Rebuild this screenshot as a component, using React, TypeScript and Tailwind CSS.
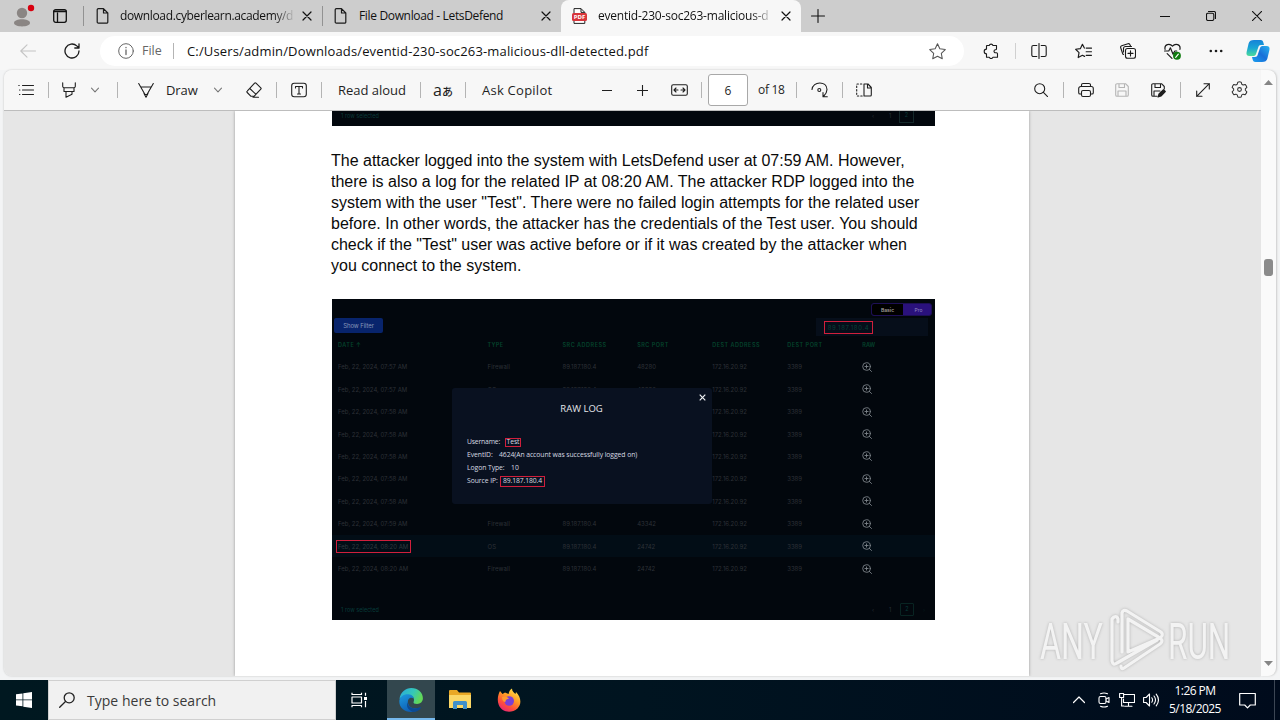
import type { ReactNode } from "react";

const ui = "font-['Open_Sans','Noto_Sans',sans-serif]";

function Icon({ cls, box = "0 0 16 16", sw = 1.1, children }: { cls: string; box?: string; sw?: number; children: ReactNode }) {
  return (
    <svg className={`shrink-0 ${cls}`} viewBox={box} fill="none" stroke="currentColor" strokeWidth={sw} strokeLinecap="round" strokeLinejoin="round">
      {children}
    </svg>
  );
}

const Rule = ({ cls }: { cls: string }) => <div className={`h-4 w-px shrink-0 bg-[#b4b4b4] ${cls}`} />;

const Doc = ({ cls }: { cls: string }) => (
  <Icon cls={`h-4 w-[13px] text-[#1b1b1b] ${cls}`} box="0 0 12 16" sw={1.2}>
    <path d="M2 .7h5l4.300 4.300v9a1.200 1.200 0 0 1-1.200 1.200H2A1.200 1.200 0 0 1 .7 14V2A1.200 1.200 0 0 1 2 .7zM7 .7V5h4.300" />
  </Icon>
);

const Cross = ({ cls }: { cls: string }) => (
  <Icon cls={cls} box="0 0 10 10" sw={1.2}>
    <path d="M1 1l8 8M9 1L1 9" />
  </Icon>
);

const Chevron = ({ cls }: { cls: string }) => (
  <Icon cls={`h-2 w-2 text-[#777] ${cls}`} box="0 0 8 8">
    <path d="M.5 2.200L4 5.800l3.500-3.600" />
  </Icon>
);

function TabStrip() {
  return (
    <div className="flex h-8 items-center bg-[#cdcdcd] text-[12px] text-[#111]">
      <svg className="ml-3 h-6 w-6 shrink-0" viewBox="0 0 24 24">
        <circle cx="10" cy="9" r="5.200" fill="#8a8583" />
        <path d="M2 19c0-5 16-5 16 0 0 4.500-16 4.500-16 0z" fill="#8a8583" />
        <circle cx="19" cy="4" r="3.200" fill="#d8000f" />
      </svg>
      <Icon cls="ml-[17px] h-[14px] w-[14px] text-[#111]" box="0 0 14 14" sw={1.3}>
        <rect x=".7" y=".7" width="12.600" height="12.600" rx="2" />
        <path d="M1 2.300h12" strokeWidth="1.800" />
        <path d="M4.500 4v9" />
      </Icon>
      <div className="ml-4 h-5 w-px shrink-0 bg-[#929292]" />
      <Doc cls="ml-3" />
      <div className="ml-[11px] w-[174px] shrink-0 overflow-hidden whitespace-nowrap bg-gradient-to-r from-[#111] from-88% to-[#c0c0c0] to-100% bg-clip-text tracking-[-0.350px] text-transparent">download.cyberlearn.academy/d</div>
      <Cross cls="ml-[8px] h-[10px] w-[10px]" />
      <div className="ml-[10px] h-5 w-px shrink-0 bg-[#929292]" />
      <Doc cls="ml-[11px]" />
      <div className="ml-[12px] w-[174px] shrink-0 whitespace-nowrap tracking-[-0.340px]">File Download - LetsDefend</div>
      <Cross cls="ml-2 h-[10px] w-[10px]" />
      <div className="ml-[10px] flex h-8 w-[240px] shrink-0 items-center rounded-t-lg bg-[#f7f7f7]">
        <svg className="ml-[11px] h-4 w-[15px] shrink-0" viewBox="0 0 15 16">
          <path d="M2 .6h7l3.800 3.800v11H2z" fill="#fff" stroke="#222" />
          <path d="M9 .6v3.800h3.800" fill="none" stroke="#222" />
          <rect x="0" y="5" width="15" height="8" rx="1.500" fill="#d8353b" />
          <text x="7.500" y="11.200" fontSize="6" fontWeight="700" fontFamily="Open Sans" textAnchor="middle" fill="#fff">PDF</text>
        </svg>
        <div className="ml-[11px] w-[173px] shrink-0 overflow-hidden whitespace-nowrap bg-gradient-to-r from-[#111] from-88% to-[#e0e0e0] to-100% bg-clip-text tracking-[-0.220px] text-transparent">eventid-230-soc263-malicious-d</div>
        <Cross cls="ml-[10px] h-[10px] w-[10px]" />
      </div>
      <Icon cls="ml-[10px] h-[14px] w-[14px]" box="0 0 14 14">
        <path d="M7 .5v13M.5 7h13" />
      </Icon>
      <Icon cls="ml-[335px] h-[10px] w-[10px]" box="0 0 10 10"><path d="M0 5.500h10" /></Icon>
      <Icon cls="ml-9 h-[10px] w-[10px]" box="0 0 10 10">
        <rect x=".5" y="2.200" width="7.300" height="7.300" rx="1.500" />
        <path d="M2.500.5H8A1.500 1.500 0 0 1 9.500 2v5.500" />
      </Icon>
      <Icon cls="ml-9 h-[10px] w-[10px]" box="0 0 10 10"><path d="M0 0l10 10M10 0L0 10" /></Icon>
    </div>
  );
}

function AddressBar() {
  return (
    <div className="flex h-[38px] items-center bg-[#f7f7f7] text-[#1b1b1b]">
      <Icon cls="ml-5 h-4 w-4 text-[#c4c4c4]"><path d="M15.500 8H1M7 1.800L.8 8 7 14.200" /></Icon>
      <Icon cls="ml-7 h-4 w-4" sw={1.3}><path d="M15 8a7 7 0 1 1-2.200-5.100L15 5M15 .8V5h-4.200" /></Icon>
      <div className="ml-5 flex h-[30px] w-[864px] shrink-0 items-center rounded-full bg-white">
        <Icon cls="ml-[18px] h-4 w-4 text-[#666]" sw={1}>
          <circle cx="8" cy="8" r="7.300" />
          <path d="M8 7v4.500M8 4.500v.2" strokeWidth="1.300" />
        </Icon>
        <div className="ml-2 w-[20px] shrink-0 whitespace-nowrap pt-[1px] text-[12.500px] text-[#666]">File</div>
        <Rule cls="ml-[11px]" />
        <div className="ml-[13px] w-[462px] shrink-0 whitespace-nowrap pt-[1px] text-[13px] tracking-[0.150px] text-[#111]">C:/Users/admin/Downloads/eventid-230-soc263-malicious-dll-detected.pdf</div>
        <Icon cls="ml-[280px] h-[17px] w-[17px] text-[#555]" sw={1}>
          <path d="M8 .8l2.200 4.700 5.100.7-3.700 3.500.9 5.100L8 12.400l-4.500 2.400.9-5.100L.7 6.200l5.100-.7z" />
        </Icon>
      </div>
      <Icon cls="ml-[19px] h-4 w-4">
        <path d="M4 2.500h2.200a2 2 0 0 1 3.800 0h3.500v3.300a1 1 0 0 1-1 1 1.500 1.500 0 0 0 0 3h1a1 1 0 0 1 1 1v3.400H10a2 2 0 0 1-3.800 0H3.500v-3.500a2.300 2.300 0 1 1 0-4.600V3z" />
      </Icon>
      <Rule cls="ml-4 bg-[#d0d0d0]" />
      <Icon cls="ml-[15px] h-4 w-4"><path d="M5.800 2.500H2.300A1.500 1.500 0 0 0 .8 4v8a1.500 1.500 0 0 0 1.500 1.500h3.500M8 .5v15M10.200 2.500h3.500A1.500 1.500 0 0 1 15.200 4v8a1.500 1.500 0 0 1-1.500 1.500h-3.500" /></Icon>
      <Icon cls="ml-7 h-[17px] w-[17px]"><path d="M8.800 4.800L7 1.200 5 5.300l-4.400.6 3.200 3.200-.8 4.600 4-2.100 2 1M10.500 4.800h5M10.500 8.200h5M10.500 11.600h5" /></Icon>
      <Icon cls="ml-[28px] h-4 w-4">
        <rect x="5.500" y="5.500" width="10" height="9.800" rx="2" />
        <path d="M8 10.400h5M10.500 7.900v5M3.500 11.500L2.800 11 .7 4.800a1.600 1.600 0 0 1 1-2L8 .8a1.600 1.600 0 0 1 2 1l.6 1.500M3.500 9V5.500a2 2 0 0 1 2-2h6" />
      </Icon>
      <Icon cls="ml-7 h-[17px] w-[17px]">
        <path d="M1 6C0 1 5.500 0 8 3c2.500-3 8-2 7 3M.5 7.500h4l1.500-3 2.500 6 1.700-3H12M3 10l4.500 4.500" />
        <circle cx="12.200" cy="12" r="3.700" fill="#107c10" stroke="none" />
        <path d="M11 13.500l2.500-3" stroke="#fff" />
      </Icon>
      <Icon cls="ml-7 h-[14px] w-[14px]" box="0 0 14 14"><g fill="currentColor" stroke="none"><circle cx="1.800" cy="7" r="1.300" /><circle cx="7" cy="7" r="1.300" /><circle cx="12.200" cy="7" r="1.300" /></g></Icon>
      <svg className="ml-[23px] h-6 w-6 shrink-0" viewBox="0 0 24 24">
        <defs>
          <linearGradient id="cpA" x1="0" y1="0" x2="0" y2="1"><stop stopColor="#1582d8" /><stop offset=".5" stopColor="#18a5d5" /><stop offset="1" stopColor="#4ddc9a" /></linearGradient>
          <linearGradient id="cpB" x1="1" y1="0" x2="0" y2="1"><stop stopColor="#28b4ef" /><stop offset=".5" stopColor="#1a6fd8" /><stop offset="1" stopColor="#1aa0f0" /></linearGradient>
        </defs>
        <path d="M8 1h6.500c2 0 2.500 1.200 3 3l.5 2h-3c-1.500 0-2.200.8-2.700 2.200L10 15c-.5 1.500-1.500 2-3 2H3.500C1 17 0 15.500.6 13l2-8.500C3.200 2 5 1 8 1z" fill="url(#cpA)" />
        <path d="M16 23H9.500c-2 0-2.500-1.200-3-3L6 18h3c1.500 0 2.200-.8 2.700-2.200L14 9c.5-1.500 1.500-2 3-2h3.500c2.500 0 3.500 1.500 2.900 4l-2 8.500c-.6 2.500-2.400 3.500-5.400 3.500z" fill="url(#cpB)" />
      </svg>
    </div>
  );
}

function PdfToolbar() {
  return (
    <div className="flex h-[41px] w-[1257px] shrink-0 items-center border-b border-[#bdbdbd] bg-[#f7f7f7] text-[13px] text-[#1f1f1f]">
      <Icon cls="ml-[14px] h-4 w-4"><path d="M4.500 3.500h11M4.500 8h11M4.500 12.500h11M.8 3.500h.4M1.500 8h.4M1.500 12.500h.4" /></Icon>
      <Rule cls="ml-[14px]" />
      <Icon cls="ml-[13px] h-4 w-[14px]" box="0 0 14 16"><path d="M.7.8v3.700a1.500 1.500 0 0 0 1.500 1.300h9.600a1.500 1.500 0 0 0 1.500-1.300V.8M2 6v3.500h10V6M4 9.500v5.700l6-3V9.500" /></Icon>
      <Chevron cls="ml-[15px]" />
      <Rule cls="ml-[18px]" />
      <Icon cls="ml-5 h-4 w-4"><path d="M.7 1.500L7 12.500h2l6.300-11M2.800 5h10.400M6 11.500l2 3.700 2-3.700" /></Icon>
      <div className="ml-3 w-8 shrink-0 whitespace-nowrap pt-[1px] tracking-[-0.100px]">Draw</div>
      <Chevron cls="ml-4" />
      <Icon cls="ml-6 h-4 w-4"><path d="M10 1.200l4.800 4.600a1 1 0 0 1 0 1.400L8 14.300H5L1.200 10.500a1 1 0 0 1 0-1.400l7.400-7.900a1 1 0 0 1 1.400 0zM3.800 6.500l6 5.700M7 15.300h5.500" /></Icon>
      <Rule cls="ml-[14px]" />
      <Icon cls="ml-[14px] h-4 w-4"><rect x=".7" y="1.200" width="14.600" height="13.600" rx="2.500" /><path d="M4.500 6V4.500h7V6M8 4.500v7.500M6.500 12h3" /></Icon>
      <Rule cls="ml-[14px]" />
      <div className="ml-4 w-[68px] shrink-0 whitespace-nowrap pt-[1px] tracking-[-0.020px]">Read aloud</div>
      <Rule cls="ml-[14px]" />
      <div className="ml-3 flex w-[19px] shrink-0 items-center whitespace-nowrap"><span className="text-[16px] leading-4">a</span><span className="pt-[1px] font-['Noto_Sans_CJK_JP',sans-serif] text-[11px] font-medium leading-4">あ</span></div>
      <Rule cls="ml-[13px]" />
      <div className="ml-4 w-[70px] shrink-0 whitespace-nowrap pt-[1px] tracking-[0.250px]">Ask Copilot</div>
      <Icon cls="ml-[50px] h-[11px] w-[10px]" box="0 0 10 11"><path d="M0 5.500h10" /></Icon>
      <Icon cls="ml-[25px] h-[11px] w-[11px]" box="0 0 11 11"><path d="M0 5.500h11M5.500 0v11" /></Icon>
      <Icon cls="ml-[23px] h-3 w-[17px]" box="0 0 17 12"><rect x=".7" y=".7" width="15.600" height="10.600" rx="1.500" /><path d="M3 6h4M5 4L3 6l2 2M14 6h-4M12 4l2 2-2 2" /></Icon>
      <Rule cls="ml-[13px]" />
      <div className="ml-[6px] flex h-8 w-10 shrink-0 items-center justify-center rounded-[3px] border border-[#a8a8a8] bg-white pt-[1px] text-[12px]">6</div>
      <div className="ml-[10px] w-[27px] shrink-0 whitespace-nowrap text-[12px] tracking-[-0.300px]">of 18</div>
      <Rule cls="ml-[11px]" />
      <Icon cls="ml-[14px] h-4 w-[17px]" box="0 0 17 16"><path d="M1 7.500C1.800-1 15.800-1.500 16 7.500c0 3-1.500 5-3.500 7M12 10.500v4.300h4.300" /><circle cx="8.300" cy="8" r="1.500" /></Icon>
      <Rule cls="ml-[14px]" />
      <Icon cls="ml-[13px] h-4 w-4"><path d="M8 2h4l3.300 3.500V13a1 1 0 0 1-1 1H8zM11.500 2v4h3.800" /><path d="M5.800 2H1.500a.8.8 0 0 0-.8.8V13.500a.5.5 0 0 0 .5.5h5" strokeDasharray="1.400 2" /></Icon>
      <Icon cls="ml-[162px] h-[14px] w-[14px]" box="0 0 14 14"><circle cx="5.700" cy="5.700" r="5" /><path d="M9.400 9.400l4.200 4.200" /></Icon>
      <Rule cls="ml-[15px]" />
      <Icon cls="ml-[14px] h-4 w-4"><path d="M3.500 4.500V3a1.500 1.500 0 0 1 1.500-1.500h6A1.500 1.500 0 0 1 12.500 3v1.500M3.500 12H2A1.300 1.300 0 0 1 .7 10.700V6.500a2 2 0 0 1 2-2h10.600a2 2 0 0 1 2 2v4.200A1.300 1.300 0 0 1 14 12h-1.500" /><rect x="3.500" y="8.500" width="9" height="6" rx="1.500" /></Icon>
      <Icon cls="ml-[21px] h-[14px] w-[14px] text-[#b5b5b5]" box="0 0 14 14"><path d="M.7 2A1.300 1.300 0 0 1 2 .7h8.500l2.800 2.800V12a1.300 1.300 0 0 1-1.300 1.300H2A1.300 1.300 0 0 1 .7 12zM4 .7v3.800h5.500V.7M3 13V8h8v5" /></Icon>
      <Icon cls="ml-[22px] h-[15px] w-[15px]" box="0 0 15 15"><path d="M6 13.300H2A1.300 1.300 0 0 1 .7 12V2A1.300 1.300 0 0 1 2 .7h8.500l2.800 2.800V6M4 .7v3.800h5.500V.7M3 13V8h6" /><path d="M7 14l1-3 4.500-4.300 1.800 1.800L10 13z" fill="currentColor" /></Icon>
      <Rule cls="ml-[14px]" />
      <Icon cls="ml-[15px] h-[14px] w-[14px]" box="0 0 14 14"><path d="M.7 13.300L13.300.7M8 .7h5.300V6M.7 8v5.300H6" /></Icon>
      <Icon cls="ml-[21px] mb-[2px] h-[17px] w-[17px] text-[#333]" box="0 0 17 18">
        <path d="M6.700 1.200Q8.500.6 10.300 1.200l.6 2.200 1.400.8 2.200-.6q1.300 1.400 1.800 3.100l-1.600 1.600v1.500l1.600 1.600q-.5 1.700-1.800 3.100l-2.200-.6-1.400.8-.6 2.200q-1.800.6-3.600 0l-.6-2.200-1.400-.8-2.200.6Q1.200 13 .7 11.400l1.600-1.600V8.300L.7 6.700q.5-1.700 1.800-3.100l2.200.6 1.400-.8z" />
        <circle cx="8.500" cy="9" r="2" />
      </Icon>
    </div>
  );
}

const rows = [
  ["Feb, 22, 2024, 07:57 AM", "Firewall", "89.187.180.4", "48280"],
  ["Feb, 22, 2024, 07:57 AM", "OS", "89.187.180.4", "48280"],
  ["Feb, 22, 2024, 07:58 AM", "", "", ""],
  ["Feb, 22, 2024, 07:58 AM", "", "", ""],
  ["Feb, 22, 2024, 07:58 AM", "", "", ""],
  ["Feb, 22, 2024, 07:58 AM", "", "", ""],
  ["Feb, 22, 2024, 07:58 AM", "", "", ""],
  ["Feb, 22, 2024, 07:59 AM", "Firewall", "89.187.180.4", "43342"],
  ["Feb, 22, 2024, 08:20 AM", "OS", "89.187.180.4", "24742"],
  ["Feb, 22, 2024, 08:20 AM", "Firewall", "89.187.180.4", "24742"],
];
const cols = "grid grid-cols-[149.500px_75px_74.700px_75px_75px_75px_auto] items-center whitespace-nowrap pl-[6px]";

function LogPanel() {
  return (
    <div className="relative ml-[97px] mt-[23px] flex h-[321px] w-[603px] flex-col overflow-hidden bg-[#02070d] font-['Inter',sans-serif] text-[6px] text-[#2d3137]">
      <div className="mr-[3px] mt-[4px] flex h-[13px] w-[61px] shrink-0 self-end overflow-hidden rounded-[3px] border border-[#1d0f55] bg-[#2a117c] text-[5px] leading-[12px] text-[#8f84c0]">
        <div className="w-[31px] bg-black text-center font-semibold text-[#a09c98]">Basic</div>
        <div className="flex-1 pl-[3px] text-center">Pro</div>
      </div>
      <div className="flex h-[20px] shrink-0 items-start justify-between pl-[2px] pr-[7px] pt-[2px]">
        <div className="h-[15px] w-[49px] rounded-[2px] bg-[#08246c] text-center text-[6px] leading-[15px] tracking-[-0.100px] text-[#8795b8]">Show Filter</div>
        <div className="flex h-[18px] w-[112px] items-center bg-[#060e1a] pl-2">
          <div className="h-[13px] w-[49px] border border-[#d01f3c] text-center leading-[11px] tracking-[0.650px] text-[#084038]">89.187.180.4</div>
        </div>
      </div>
      <div className={`${cols} h-[19.500px] shrink-0 pb-[2px] text-[5.500px] font-semibold tracking-[0.500px] text-[#04432c]`}>
        <div>DATE ↑</div><div className="tracking-[0.350px]">TYPE</div><div>SRC ADDRESS</div><div>SRC PORT</div><div>DEST ADDRESS</div><div>DEST PORT</div><div className="tracking-[0.100px]">RAW</div>
      </div>
      {rows.map((r, i) => (
        <div key={i} className={`${cols} h-[22.440px] shrink-0 ${i === 8 ? "bg-[#020d16]" : ""}`}>
          <div className={i === 8 ? "ml-[-2px] h-[13px] w-[75px] border border-[#d01f3c] pl-[1px] leading-[11px] tracking-[-0.020px] text-[#303a40]" : "tracking-[-0.020px]"}>{r[0]}</div>
          <div className="tracking-[0.100px]">{r[1]}</div>
          <div>{r[2]}</div>
          <div>{r[3]}</div>
          <div>172.16.20.92</div>
          <div>3389</div>
          <Icon cls="h-[10px] w-[10px] text-[#7d8389]" box="0 0 10 10" sw={0.9}>
            <circle cx="4.500" cy="4.500" r="3.800" />
            <path d="M7.300 7.300L9.500 9.500M2.900 4.500h3.200M4.500 2.900v3.200" />
          </Icon>
        </div>
      ))}
      <div className="mt-[20px] flex h-[20px] shrink-0 items-center pl-[9px] text-[5.500px] text-[#073c3a]">
        <div className="w-[531px] tracking-[0.050px]">1 row selected</div>
        <div className="w-[17px] text-[#2a3036]">‹</div>
        <div className="w-[11px] text-[#2a3036]">1</div>
        <div className="h-[13px] w-[14px] rounded-[1px] border border-[#082422] text-center leading-[11px]">2</div>
        <div className="ml-[9px] text-[#051a1c]">›</div>
      </div>
      <div className={`absolute left-[120px] top-[89px] flex h-[116px] w-[260px] flex-col rounded-[3px] bg-[#091120] px-[15px] text-[6.800px] text-[#d7dae0] ${ui}`}>
        <svg className="mr-[-9px] mt-[6px] h-[7px] w-[7px] shrink-0 self-end" viewBox="0 0 7 7" fill="none" stroke="#f0f2f4" strokeWidth="1.200"><path d="M.7.7l5.600 5.600M6.300.7L.7 6.300" /></svg>
        <div className="mt-[1px] pr-[1px] text-center text-[9.500px] leading-[14px] text-[#e4e6ea]">RAW LOG</div>
        <div className="mt-[20px] flex h-[13px] shrink-0 items-center"><span className="w-[38px] tracking-[-0.180px]">Username:</span><span className="flex h-[9px] w-[16px] items-center justify-center border border-[#d01f3c] tracking-[-0.100px]">Test</span></div>
        <div className="flex h-[13px] shrink-0 items-center"><span className="w-[32px] tracking-[-0.060px]">EventID:</span><span className="tracking-[-0.070px]">4624(An account was successfully logged on)</span></div>
        <div className="flex h-[13px] shrink-0 items-center"><span className="w-[44px] tracking-[-0.060px]">Logon Type:</span><span>10</span></div>
        <div className="flex h-[13px] shrink-0 items-center"><span className="w-[33px] tracking-[-0.060px]">Source IP:</span><span className="flex h-[11px] w-[45px] items-center justify-center border border-[#d01f3c] tracking-[-0.120px]">89.187.180.4</span></div>
      </div>
    </div>
  );
}

function Viewer() {
  return (
    <div className="flex h-[565px] w-[1257px] shrink-0 overflow-hidden rounded-bl-lg bg-[#e6e6e6]">
      <div className="ml-[231px] h-[565px] w-[794px] bg-white shadow-[0_0_3px_#999]">
        <div className="ml-[97px] flex h-[15px] w-[603px] items-start overflow-hidden bg-[#02070d] pl-[9px] font-['Inter',sans-serif] text-[5.500px] leading-[10px] text-[#0a3a38]">
          <div className="w-[531px] tracking-[0.050px]">1 row selected</div>
          <div className="w-[17px] text-[#2a3036]">‹</div>
          <div className="w-[10px] text-[#2a3036]">1</div>
          <div className="mt-[-2px] h-[14px] w-[15px] border border-[#14282a] text-center">2</div>
        </div>
        <div className="ml-[96px] mt-[24px] whitespace-nowrap font-['Liberation_Sans',Arial,sans-serif] text-[16px] leading-[21px] text-[#0a0a0a]">
          <div>The attacker logged into the system with LetsDefend user at 07:59 AM. However,</div>
          <div className="tracking-[0.010px]">there is also a log for the related IP at 08:20 AM. The attacker RDP logged into the</div>
          <div>system with the user "Test". There were no failed login attempts for the related user</div>
          <div>before. In other words, the attacker has the credentials of the Test user. You should</div>
          <div className="tracking-[-0.012px]">check if the "Test" user was active before or if it was created by the attacker when</div>
          <div>you connect to the system.</div>
        </div>
        <LogPanel />
      </div>
    </div>
  );
}

function Watermark() {
  return (
    <svg className="absolute left-[1030px] top-[600px] h-[80px] w-[210px] opacity-55 drop-shadow-[0_0_1.500px_#888]" viewBox="1030 600 210 80" fill="none" stroke="#fff" strokeWidth="3.200" strokeLinecap="round" strokeLinejoin="round">
      <g fill="#fff" stroke="none" fontFamily="Roboto" fontSize="50">
        <text transform="translate(1040 658.500) scale(.645 1)">ANY</text>
        <text transform="translate(1168 658.500) scale(.63 1)">RUN</text>
      </g>
      <path d="M1118 622V619q-1-3-4-2l-2 2v42q1 5 5 2l40-23M1122 652V613q1-4 5-2l34 21q3 3-1 6l-32-19v33l32-14q4 3 0 6l-36 24q-3 2-3-2" />
    </svg>
  );
}

function Taskbar() {
  return (
    <div className="flex h-10 items-center bg-gradient-to-r from-[#001820] via-[#001420] to-[#000b1c] text-white">
      <svg className="ml-4 h-4 w-4 shrink-0" viewBox="0 0 16 16" fill="#fff"><path d="M0 2.300l6.500-.9v6H0zM7.300 1.300L16 0v7.400H7.300zM0 8.300h6.500v6L0 13.500zM7.300 8.300H16V16l-8.700-1.300z" /></svg>
      <div className="ml-4 flex h-10 w-72 shrink-0 items-center border border-[#d0d0d0] bg-[#f1f1f1]">
        <Icon cls="ml-[10px] h-4 w-4 text-[#222]" sw={1.3}><circle cx="10.200" cy="5.800" r="5" /><path d="M6.500 9.500L.7 15.300" /></Icon>
        <div className="ml-[12px] whitespace-nowrap pt-[1px] text-[14px] tracking-[0.020px] text-[#3a3a3a]">Type here to search</div>
      </div>
      <Icon cls="ml-[15px] h-4 w-[17px]" box="0 0 17 16" sw={1.2}>
        <path d="M1 .8V2.500h9.500V.8M1 15.200v-1.700h9.500v1.700M1 5h9.500v6H1zM14.500 .8v3M14.500 9v6.200" strokeLinecap="butt" />
        <path d="M13 5h3v3h-3z" fill="#fff" stroke="none" />
      </Icon>
      <div className="ml-[19px] flex h-10 w-12 shrink-0 flex-col items-center border-b-2 border-[#76b9ed] bg-[#33474e]">
        <svg className="mt-[8px] h-6 w-6" viewBox="0 0 24 24">
          <defs>
            <linearGradient id="edA" x1="0" y1="0" x2="1" y2=".4"><stop stopColor="#28a8e0" /><stop offset=".6" stopColor="#35c8b8" /><stop offset="1" stopColor="#62d858" /></linearGradient>
            <linearGradient id="edB" x1="0" y1="0" x2=".6" y2="1"><stop stopColor="#1d9be0" /><stop offset="1" stopColor="#0d59b0" /></linearGradient>
          </defs>
          <path d="M.5 11C1.500 4 6.500 0 12.300 0 19 0 23.900 4.800 23.900 10.300c0 3.500-2.600 5.700-5.800 5.700-2.700 0-4-1-3.500-2 1.200-2.500.2-6.500-4.600-6.500C5.500 7.500 2 9 .5 11z" fill="url(#edA)" />
          <path d="M.3 13.500C.3 8.500 5 5.800 9.500 6.200c3.500.3 5.500 2.800 5.200 4.300-3.500-2-6.400.5-5.700 4.500.6 4 5 6.800 12 4.500-2 3-5.200 4.500-9 4.500C5.500 24 .3 19.500.3 13.500z" fill="url(#edB)" />
          <path d="M9 14c-.5 5 5 8.300 12.300 5.300.6-.3.900.2.600.6-1.700 2.500-4.700 4-8 4-5-2-7.400-6-4.900-9.900z" fill="#0c4a93" />
        </svg>
      </div>
      <svg className="ml-[14px] h-[20px] w-[22px] shrink-0" viewBox="0 0 22 20">
        <path d="M1 0h7l2 2.500h11a1 1 0 0 1 1 1V18H0V1a1 1 0 0 1 1-1z" fill="#e9a825" />
        <path d="M0 5h22v13H0z" fill="#fbd766" />
        <path d="M4 19v-6.500A1.500 1.500 0 0 1 5.500 11h11a1.500 1.500 0 0 1 1.500 1.500V19h-4v-4H8v4z" fill="#3f8fcb" />
      </svg>
      <svg className="ml-[26px] h-6 w-6 shrink-0" viewBox="0 0 24 24">
        <defs><linearGradient id="ff" x1=".8" y1="0" x2=".2" y2="1"><stop stopColor="#ffe84a" /><stop offset=".4" stopColor="#ff9a25" /><stop offset=".7" stopColor="#ff4f3a" /><stop offset="1" stopColor="#e4207d" /></linearGradient></defs>
        <path d="M3 3l2.500 3L8 4.500 11.500 6C12 3.500 13 1.500 15 .5c0 3 2 4 3.500 5.500l.5-2c5 5 6 12 1.500 16.500C14 26 4.500 24 1.800 17-.2 12 1 6.500 3 3z" fill="url(#ff)" />
        <circle cx="12.200" cy="13" r="4.800" fill="#7a3fd6" />
        <path d="M5 9c3-1.500 6 0 7 1.800-2 0-3.500 1.200-3.500 3C6.500 14.500 5 12 5 9z" fill="#ff9a30" />
      </svg>
      <Icon cls="ml-[552px] h-3 w-3" box="0 0 12 12" sw={1.2}><path d="M.5 8.500L6 3l5.500 5.500" /></Icon>
      <Icon cls="ml-[13px] h-4 w-3" box="0 0 12 16"><rect x="1" y="4.500" width="7" height="7" rx="1.500" /><path d="M8 7l3-1.500v5L8 9M2.500 1.800Q6 .2 9.500 1.800M2.500 14.200Q6 15.800 9.500 14.200" /></Icon>
      <Icon cls="ml-[9px] h-4 w-4"><path d="M5 2.500h10.500v8H4.500V7M9.500 10.500V14M6 14.200h7M.6 1.500h4v4h-4zM2.600 5.500V14H5" /></Icon>
      <Icon cls="ml-[8px] h-4 w-4"><path d="M.6 5.500h2.500L6.500 2v12L3.100 10.500H.6zM8.800 5.800q1.500 2.200 0 4.400M11 4q3 4 0 8M13.200 2.200q4.500 5.800 0 11.600" /></Icon>
      <div className="ml-[8px] w-14 shrink-0 whitespace-nowrap text-center text-[12px] leading-[18px] tracking-[-0.550px]"><div>1:26 PM</div><div>5/18/2025</div></div>
      <Icon cls="ml-[16px] h-[17px] w-[17px]" box="0 0 17 17" sw={1.2}><path d="M.7 1.500h15.600v11.500h-5L8.500 15.800 5.700 13h-5z" /></Icon>
      <div className="ml-[18px] h-10 w-px bg-[#3c4654]" />
    </div>
  );
}

export default function App() {
  return (
    <div className={`relative flex h-[720px] w-[1280px] flex-col overflow-hidden bg-[#f3f4f5] ${ui}`}>
      <TabStrip />
      <AddressBar />
      <div className="flex h-[610px] shrink-0 pb-1 pl-1">
        <div className="flex flex-col overflow-hidden rounded-l-lg shadow-[0_0_2px_#bbb]">
          <PdfToolbar />
          <Viewer />
        </div>
        <div className="flex w-[15px] shrink-0 flex-col items-center rounded-r-lg bg-[#fafafa] shadow-[1px_0_2px_#ccc]">
          <svg className="mt-[10px] h-[5px] w-[9px]" viewBox="0 0 9 5"><path d="M4.500 0L9 5H0z" fill="#858585" /></svg>
          <div className="mt-[174px] h-[17px] w-[9px] rounded-[3px] bg-[#8b8b8b]" />
          <svg className="mt-[385px] h-[5px] w-[9px]" viewBox="0 0 9 5"><path d="M4.500 5L9 0H0z" fill="#858585" /></svg>
        </div>
      </div>
      <Taskbar />
      <Watermark />
    </div>
  );
}
